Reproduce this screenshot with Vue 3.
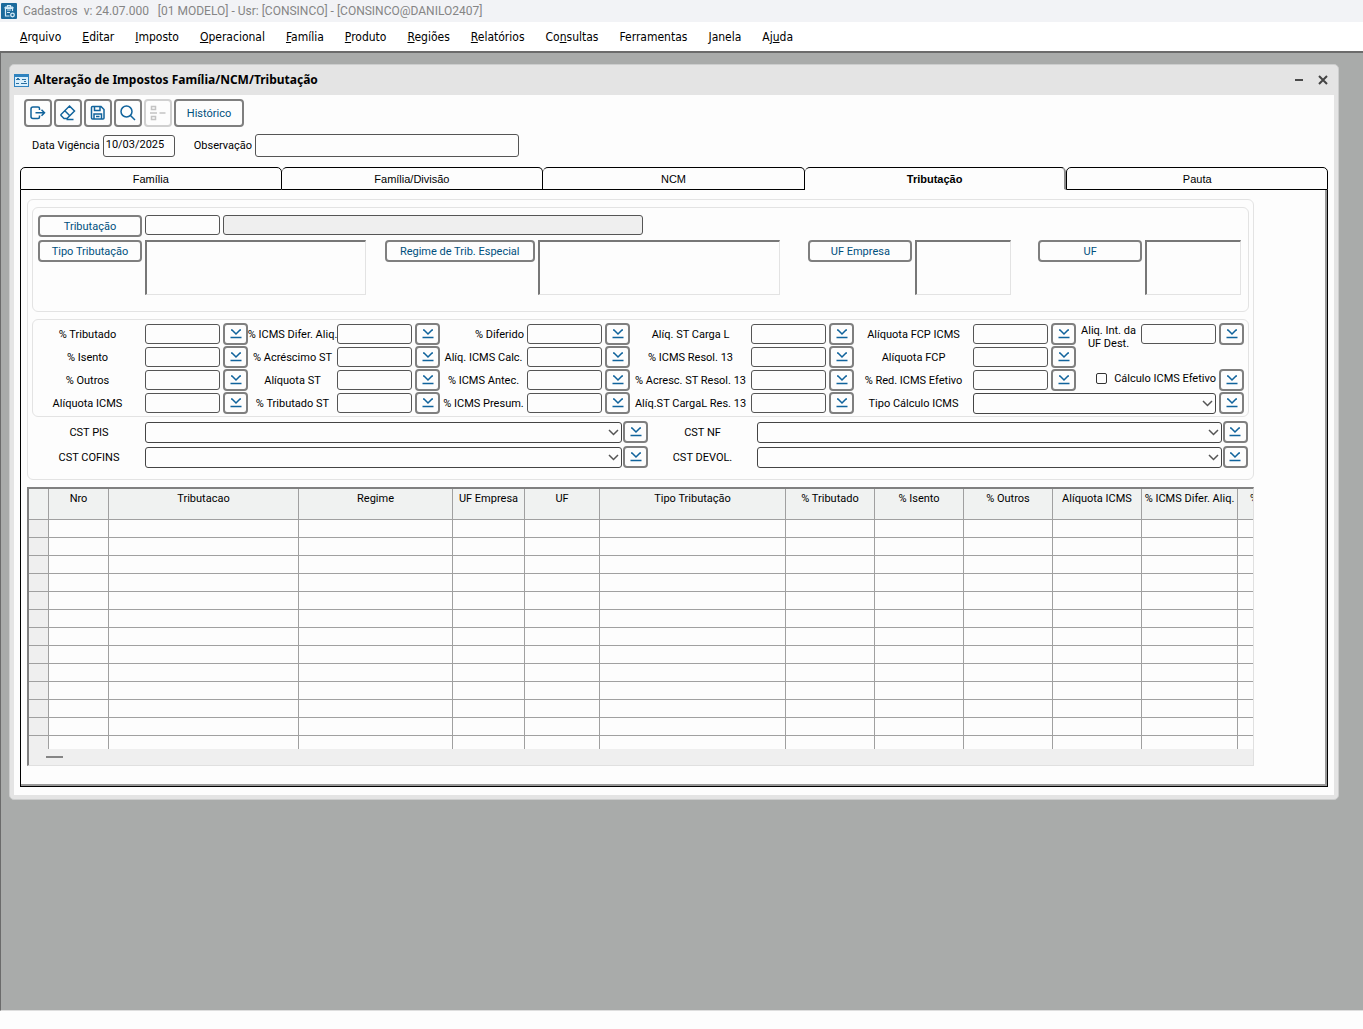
<script setup>
import { ref } from 'vue'

const menus = [
  ['', 'A', 'rquivo'],
  ['', 'E', 'ditar'],
  ['', 'I', 'mposto'],
  ['', 'O', 'peracional'],
  ['', 'F', 'amília'],
  ['', 'P', 'roduto'],
  ['', 'R', 'egiões'],
  ['', 'R', 'elatórios'],
  ['Co', 'n', 'sultas'],
  ['Ferramentas', '', ''],
  ['', 'J', 'anela'],
  ['Aj', 'u', 'da'],
]

const tabs = ['Família', 'Família/Divisão', 'NCM', 'Tributação', 'Pauta']
const activeTab = ref('Tributação')
const vigencia = ref('10/03/2025')

const filters = [
  { id: 'tipo', label: 'Tipo Tributação', size: 'wide' },
  { id: 'regime', label: 'Regime de Trib. Especial', size: 'wider' },
  { id: 'uf-empresa', label: 'UF Empresa', size: 'narrow' },
  { id: 'uf', label: 'UF', size: 'narrow' },
]

const rateRows = [
  ['% Tributado', '% ICMS Difer. Aliq.', '% Diferido', 'Alíq. ST Carga L', 'Alíquota FCP ICMS'],
  ['% Isento', '% Acréscimo ST', 'Alíq. ICMS Calc.', '% ICMS Resol. 13', 'Alíquota FCP'],
  ['% Outros', 'Alíquota ST', '% ICMS Antec.', '% Acresc. ST Resol. 13', '% Red. ICMS Efetivo'],
  ['Alíquota ICMS', '% Tributado ST', '% ICMS Presum.', 'Alíq.ST CargaL Res. 13'],
]

const cstFields = ['CST PIS', 'CST NF', 'CST COFINS', 'CST DEVOL.']

const columns = [
  { title: 'Nro', width: 60 },
  { title: 'Tributacao', width: 190 },
  { title: 'Regime', width: 154 },
  { title: 'UF Empresa', width: 72 },
  { title: 'UF', width: 75 },
  { title: 'Tipo Tributação', width: 186 },
  { title: '% Tributado', width: 89 },
  { title: '% Isento', width: 89 },
  { title: '% Outros', width: 89 },
  { title: 'Alíquota ICMS', width: 89 },
  { title: '% ICMS Difer. Aliq.', width: 96 },
]
</script>

<template>
  <div class="app">
    <header class="titlebar">
      <svg class="app-icon" width="16" height="16" viewBox="0 0 16 16" aria-hidden="true">
        <rect width="16" height="16" rx="1" fill="#1b6a9c" />
        <path d="M4.500 4v9h4M11.500 8V4M6.500 2.500h3v2h-3z" fill="none" stroke="#d6ebf7" stroke-width="1.200" />
        <path d="M4 4h8v1.500H4zM6 7h4M6 9.500h3" fill="#b9dcf0" stroke="#d6ebf7" stroke-width="1" />
        <circle cx="11.500" cy="12" r="1.800" fill="none" stroke="#d6ebf7" stroke-width="1.300" />
      </svg>
      <span class="app-name">Cadastros&nbsp; v: 24.07.000&nbsp;&nbsp; [01 MODELO] - Usr: [CONSINCO] - [CONSINCO@DANILO2407]</span>
    </header>

    <nav class="menubar">
      <button v-for="m in menus" :key="m.join('')" type="button" class="menu">{{ m[0] }}<u>{{ m[1] }}</u>{{ m[2] }}</button>
    </nav>

    <main class="workspace">
      <section class="window">
        <div class="window-head">
          <svg width="15" height="13" viewBox="0 0 15 13" aria-hidden="true">
            <rect width="15" height="13" fill="#2f83bf" />
            <rect x="1" y="3" width="13" height="9" fill="#d9effc" />
            <path d="M2 5.500h4M3 4.500h2M8 5.500h4M2 9.500h3M7 9.500h6M10 7.500h2" stroke="#2c6f9f" fill="none" />
          </svg>
          <h1 class="window-title">Alteração de Impostos Família/NCM/Tributação</h1>
          <button type="button" class="win-btn" aria-label="Minimizar">
            <svg width="10" height="10" viewBox="0 0 10 10"><path d="M1 5h8" stroke="#4a4a4a" stroke-width="2" /></svg>
          </button>
          <button type="button" class="win-btn" aria-label="Fechar">
            <svg width="10" height="10" viewBox="0 0 10 10"><path d="M1 1l8 8M9 1l-8 8" stroke="#444" stroke-width="2" /></svg>
          </button>
        </div>

        <div class="window-body">
          <div class="toolbar">
            <button type="button" class="btn tool" aria-label="Sair">
              <svg width="18" height="18" viewBox="0 0 18 18"><path d="M10.500 6V4.500Q10.500 3 9 3H4Q2 3 2 5v7.500q0 2 2 2h5q1.500 0 1.500-1.500V11.500M6.500 8.800h9M12.500 5.800l3 3-3 3" /></svg>
            </button>
            <button type="button" class="btn tool" aria-label="Limpar">
              <svg width="18" height="18" viewBox="0 0 18 18"><path d="M10.500 2L15.500 7 8 14.500H5L2 11.500v-1zM5.800 6.700l5 5M7.500 15.500h7" /></svg>
            </button>
            <button type="button" class="btn tool" aria-label="Salvar">
              <svg width="18" height="18" viewBox="0 0 18 18"><path d="M3.500 2.500h8.500l3 3V14q0 1-1 1H3.500q-1 0-1-1V3.500Q2.500 2.500 3.500 2.500zM5.500 3v3.500h5.500V3M5 15v-5h7.500v5M7 12.500h3.500" /></svg>
            </button>
            <button type="button" class="btn tool" aria-label="Pesquisar">
              <svg width="18" height="18" viewBox="0 0 18 18"><circle cx="7.500" cy="7.500" r="5.500" /><path d="M11.500 11.500L16 16" /></svg>
            </button>
            <button type="button" class="btn tool" aria-label="Detalhar" disabled>
              <svg width="18" height="18" viewBox="0 0 18 18"><path d="M2.500 2.500h4v3h-4zM2.500 12.500h4v3h-4zM1 9h7M10.500 9h6" /></svg>
            </button>
            <button type="button" class="btn history">Histórico</button>
          </div>

          <div class="header-fields">
            <label for="vigencia">Data Vigência</label>
            <input id="vigencia" v-model="vigencia" class="field date" type="text">
            <label for="observacao" class="obs-label">Observação</label>
            <input id="observacao" class="field obs" type="text">
          </div>

          <div class="tabs" role="tablist">
            <button
              v-for="t in tabs" :key="t" type="button" role="tab" class="tab"
              :class="{ active: t === activeTab }" :aria-selected="t === activeTab" @click="activeTab = t"
            >{{ t }}</button>
          </div>

          <div class="panel" role="tabpanel">
            <div class="group outer">
              <div class="group selection">
                <div class="lookup">
                  <button type="button" class="btn wide-btn">Tributação</button>
                  <input class="field code" type="text" aria-label="Código da tributação">
                  <input class="field description" type="text" aria-label="Descrição da tributação" readonly>
                </div>
                <div class="filters">
                  <div v-for="f in filters" :key="f.id" class="filter">
                    <button type="button" class="btn wide-btn" :class="{ long: f.size === 'wider' }">{{ f.label }}</button>
                    <select class="list" :class="f.size" size="3" :aria-label="f.label"></select>
                  </div>
                </div>
              </div>

              <div class="group rates">
                <template v-for="(row, r) in rateRows" :key="r">
                  <template v-for="(label, c) in row" :key="label">
                    <label class="caption" :class="{ end: label === '% Diferido' }" :for="`rate-${r}-${c}`">{{ label }}</label>
                    <input :id="`rate-${r}-${c}`" class="field" type="text">
                    <button type="button" class="btn apply" :aria-label="`Aplicar ${label}`">
                      <svg width="14" height="14" viewBox="0 0 14 14"><path d="M2 3h1l4 4 4-4h1M1.500 10.500h11" /></svg>
                    </button>
                  </template>
                  <template v-if="r === 0">
                    <label class="caption two-lines" for="aliq-int">Aliq. Int. da<br>UF Dest.</label>
                    <input id="aliq-int" class="field" type="text">
                  </template>
                  <span v-else-if="r === 1" class="blank"></span>
                  <label v-else-if="r === 2" class="check"><input type="checkbox">Cálculo ICMS Efetivo</label>
                  <template v-else>
                    <label class="caption" for="tipo-calculo">Tipo Cálculo ICMS</label>
                    <span class="combo calc-combo">
                      <select id="tipo-calculo"></select>
                      <svg width="11" height="7" viewBox="0 0 11 7"><path d="M1 1l4.500 4.500L10 1" /></svg>
                    </span>
                  </template>
                  <button v-if="r !== 1" type="button" class="btn apply" aria-label="Aplicar">
                    <svg width="14" height="14" viewBox="0 0 14 14"><path d="M2 3h1l4 4 4-4h1M1.500 10.500h11" /></svg>
                  </button>
                </template>
              </div>

              <div class="cst">
                <template v-for="label in cstFields" :key="label">
                  <label class="caption" :for="label">{{ label }}</label>
                  <span class="combo">
                    <select :id="label"></select>
                    <svg width="11" height="7" viewBox="0 0 11 7"><path d="M1 1l4.500 4.500L10 1" /></svg>
                  </span>
                  <button type="button" class="btn apply" :aria-label="`Aplicar ${label}`">
                    <svg width="14" height="14" viewBox="0 0 14 14"><path d="M2 3h1l4 4 4-4h1M1.500 10.500h11" /></svg>
                  </button>
                </template>
              </div>
            </div>

            <div class="datagrid">
              <div class="viewport">
                <table>
                  <colgroup>
                    <col class="marker">
                    <col v-for="c in columns" :key="c.title" :style="{ width: c.width + 'px' }">
                    <col>
                  </colgroup>
                  <thead>
                    <tr>
                      <th></th>
                      <th v-for="c in columns" :key="c.title" scope="col">{{ c.title }}</th>
                      <th class="next" scope="col">%</th>
                    </tr>
                  </thead>
                  <tbody>
                    <tr v-for="n in 13" :key="n">
                      <td v-for="k in columns.length + 2" :key="k"></td>
                    </tr>
                  </tbody>
                </table>
              </div>
              <div class="scrollbar"><span class="thumb"></span></div>
            </div>
          </div>
        </div>
      </section>
    </main>

    <footer class="statusbar"></footer>
  </div>
</template>

<style>
body {
  margin: 0;
}
</style>

<style scoped>
* {
  box-sizing: border-box;
}

.app {
  display: flex;
  flex-direction: column;
  min-height: 100vh;
  overflow: hidden;
  background: #fdfdfd;
  color: #000;
  font: 11px/13px Roboto, "Liberation Sans", sans-serif;
}

button,
input,
select {
  margin: 0;
  padding: 0;
  font: inherit;
  color: inherit;
}

svg {
  display: block;
  flex: none;
}

.titlebar {
  display: flex;
  align-items: center;
  gap: 6px;
  height: 22px;
  padding: 0 1px 1px;
  background: #f2f3f6;
  color: #858585;
  font: 12px/16px Roboto, "Noto Sans", sans-serif;
  white-space: pre;
}

.menubar {
  display: flex;
  gap: 21px;
  height: 29px;
  padding: 0 20px;
  background: #fff;
  font: 12px/16px "DejaVu Sans Condensed", "DejaVu Sans", sans-serif;
}

.menu {
  border: 0;
  background: none;
  white-space: nowrap;
}

.workspace {
  flex: 1;
  padding: 11px 24px 11px 8px;
  border-top: 2px solid #6b6b6b;
  border-left: 1px solid #6b6b6b;
  border-bottom: 1px solid #dedede;
  background: #a9abaa;
}

.statusbar {
  height: 18px;
  background: #fdfdfd;
}

.window {
  border: 1px solid #cccdcd;
  border-radius: 5px;
  background: #e4e4e4;
  padding: 0 4px 4px;
}

.window-head {
  display: flex;
  align-items: center;
  gap: 14px;
  height: 30px;
  padding-right: 6px;
}

.window-title {
  flex: 1;
  margin: 0 0 0 -9px;
  font: bold 12px/16px "Noto Sans", "Open Sans", sans-serif;
}

.win-btn {
  border: 0;
  background: none;
}

.window-body {
  padding: 4px 6px 8px;
  background: #fdfdfd;
}

.btn {
  display: flex;
  align-items: center;
  justify-content: center;
  border: 2px solid #7f7f7f;
  border-radius: 4px;
  background: #fdfdfd;
  color: #00507d;
  white-space: nowrap;
}

.btn svg {
  fill: none;
  stroke: #10639c;
  stroke-width: 1.5;
}

.btn:disabled {
  border-color: #d0d0d0;
}

.btn:disabled svg {
  stroke: #c4c4c4;
}

.toolbar {
  display: flex;
  gap: 2px;
  padding-left: 4px;
}

.tool {
  width: 28px;
  height: 28px;
}

.history {
  width: 70px;
  height: 28px;
}

.header-fields {
  display: flex;
  align-items: center;
  gap: 3px;
  height: 23px;
  margin: 7px 0 10px;
  padding-left: 12px;
}

.obs-label {
  margin-left: 16px;
}

.field {
  width: 100%;
  height: 20px;
  border: 1px solid #555;
  border-radius: 3px;
  background: #fdfdfd;
}

.date {
  width: 72px;
  height: 22px;
  padding: 0 2px 2px;
}

.obs {
  width: 264px;
  height: 23px;
}

.tabs {
  display: grid;
  grid-template-columns: repeat(5, 1fr);
}

.tab {
  height: 23px;
  padding-top: 2px;
  border: 1px solid #000;
  border-left-width: 0;
  border-radius: 5px 5px 0 0;
  background: #fdfdfd;
  font: 11px/13px "Liberation Sans", Arial, sans-serif;
}

.tab:first-child {
  border-left-width: 1px;
}

.tab.active {
  border-right: 2px solid #8c8c8c;
  border-bottom-color: transparent;
  font-weight: bold;
}

.tab.active + .tab {
  border-left-width: 1px;
}

.panel {
  padding: 9px 73px 20px 6px;
  border: 1px solid #000;
  border-top: 0;
  box-shadow: inset -2px -2px 0 #999;
}

.group {
  border: 1px solid #e3e3e3;
  border-radius: 6px;
}

.outer {
  padding: 7px 4px 11px;
}

.selection {
  padding: 7px 5px 16px;
}

.lookup {
  display: flex;
  gap: 3px;
  height: 25px;
}

.wide-btn {
  flex: none;
  width: 104px;
  height: 22px;
}

.long {
  width: 150px;
}

.code {
  width: 75px;
}

.description {
  width: 420px;
  background: #efefef;
}

.filters {
  display: grid;
  grid-template-columns: 347fr 424fr 230fr 205fr;
}

.filter {
  display: flex;
  gap: 3px;
}

.list {
  height: 55px;
  border: 1px solid #e3e3e3;
  border-top: 2px solid #777;
  border-left: 2px solid #777;
  border-radius: 0;
  background: #fdfdfd;
  overflow: hidden;
}

.wide {
  width: 221px;
}

.wider {
  width: 242px;
}

.narrow {
  width: 96px;
}

.rates {
  display: grid;
  grid-template-columns:
    109fr 75px 25px 83fr 75px 25px 81fr 75px 25px
    115fr 75px 25px 113fr 75px 25px 59fr 75px 25px;
  grid-auto-rows: 22px;
  gap: 1px 3px;
  align-items: center;
  margin-top: 7px;
  padding: 3px 4px 2px 0;
}

.caption {
  display: flex;
  justify-content: center;
  min-width: 0;
  white-space: nowrap;
}

.end {
  justify-content: flex-end;
}

.two-lines {
  align-self: start;
  height: 22px;
  margin-top: 1px;
  text-align: center;
}

.apply {
  width: 25px;
  height: 22px;
}

.blank {
  grid-column: span 3;
}

.check {
  grid-column: span 2;
  display: flex;
  align-items: center;
  justify-content: flex-end;
  gap: 7px;
  height: 18px;
  align-self: start;
}

.check input {
  appearance: none;
  width: 11px;
  height: 11px;
  border: 1px solid #333;
  border-radius: 2px;
}

.combo {
  display: grid;
  align-items: center;
  height: 21px;
}

.calc-combo {
  grid-column: span 4;
}

.combo select {
  grid-area: 1 / 1;
  appearance: none;
  width: 100%;
  height: 21px;
  border: 1px solid #444;
  border-radius: 3px;
  background: #fdfdfd;
}

.combo svg {
  grid-area: 1 / 1;
  justify-self: end;
  margin-right: 3px;
  fill: none;
  stroke: #555;
  stroke-width: 1.5;
  pointer-events: none;
}

.cst {
  display: grid;
  grid-template-columns: 112px 477fr 25px 109px 465fr 25px;
  grid-auto-rows: 22px;
  row-gap: 3px;
  align-items: center;
  margin-top: 4px;
  padding: 0 1px;
}

.cst .combo {
  margin-right: 1px;
}

.datagrid {
  margin-top: 7px;
  border: 1px solid #e0e0e0;
  border-top: 2px solid #808080;
  border-left: 2px solid #808080;
}

.viewport {
  height: 260px;
  overflow: hidden;
}

table {
  width: 100%;
  table-layout: fixed;
  border-collapse: separate;
  border-spacing: 0;
}

.marker {
  width: 20px;
}

th,
td {
  padding: 0;
  border-right: 1px solid #a0a0a0;
  border-bottom: 1px solid #a0a0a0;
}

th {
  height: 31px;
  padding-top: 3px;
  background: #f0f2f1;
  font-weight: normal;
  vertical-align: top;
  white-space: nowrap;
}

.next {
  padding-left: 12px;
  overflow: hidden;
  text-align: left;
}

th:last-child,
td:last-child {
  border-right: 0;
}

td {
  height: 18px;
}

td:first-child {
  background: #efefef;
}

.scrollbar {
  display: flex;
  align-items: center;
  height: 16px;
  padding-left: 17px;
  background: #efefef;
}

.thumb {
  width: 17px;
  height: 2px;
  background: #858585;
}
</style>
